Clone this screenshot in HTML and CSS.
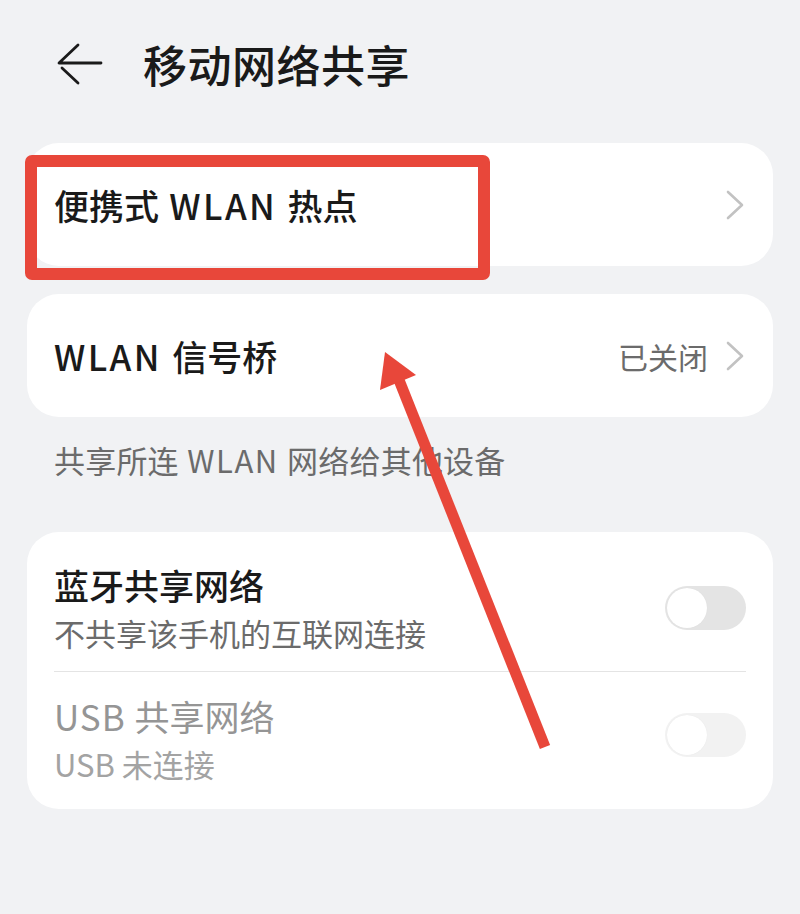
FILE: index.html
```html
<!DOCTYPE html>
<html lang="zh-CN">
<head>
<meta charset="utf-8">
<title>移动网络共享</title>
<link rel="stylesheet" href="styles.css">
</head>
<body>
<div class="page">
  <header class="header">
    <svg class="back" width="48" height="48" viewBox="0 0 48 48">
      <path d="M22 5 L3 23 L45 23" fill="none" stroke="#1a1a1a" stroke-width="2.8" stroke-linecap="round" stroke-linejoin="round"/>
      <path d="M6 28 L22 43" fill="none" stroke="#1a1a1a" stroke-width="2.8" stroke-linecap="round"/>
    </svg>
    <h1 class="title">移动网络共享</h1>
  </header>

  <section class="card card-single">
    <div class="row-single">
      <span class="item-title">便携式<span class="lat"> WLAN </span>热点</span>
      <span class="row-end">
        <svg class="chev" width="20" height="30" viewBox="0 0 20 30"><path d="M2 2 L16 15 L2 28" fill="none" stroke="#c2c2c2" stroke-width="2.6" stroke-linecap="round" stroke-linejoin="round"/></svg>
      </span>
    </div>
  </section>

  <section class="card card-single card-gap">
    <div class="row-single">
      <span class="item-title"><span class="lat">WLAN </span>信号桥</span>
      <span class="row-end">
        <span class="status">已关闭</span>
        <svg class="chev" width="20" height="30" viewBox="0 0 20 30"><path d="M2 2 L16 15 L2 28" fill="none" stroke="#c2c2c2" stroke-width="2.6" stroke-linecap="round" stroke-linejoin="round"/></svg>
      </span>
    </div>
  </section>

  <p class="caption">共享所连<span class="lat-c"> WLAN </span>网络给其他设备</p>

  <section class="card card-list">
    <div class="row-double row-first">
      <div class="texts">
        <span class="item-title">蓝牙共享网络</span>
        <span class="item-sub">不共享该手机的互联网连接</span>
      </div>
      <span class="toggle"><span class="knob"></span></span>
    </div>
    <div class="divider"></div>
    <div class="row-double row-last disabled">
      <div class="texts">
        <span class="item-title"><span class="lat-s">USB </span>共享网络</span>
        <span class="item-sub">USB 未连接</span>
      </div>
      <span class="toggle toggle-off"><span class="knob"></span></span>
    </div>
  </section>

  <div class="mark-box"></div>
  <svg class="mark-arrow" width="800" height="914" viewBox="0 0 800 914">
    <line x1="399" y1="380" x2="545" y2="747" stroke="#e8473a" stroke-width="11"/>
    <polygon points="385,352 380,390 416,375" fill="#e8473a"/>
  </svg>
</div>
</body>
</html>
```

FILE: styles.css
```css
html, body {
  margin: 0;
  padding: 0;
}
body {
  background: #f1f2f4;
  font-family: "Noto Sans CJK SC", "Noto Sans", sans-serif;
  color: #1a1a1a;
}
.page {
  position: relative;
  width: 800px;
  height: 914px;
  overflow: hidden;
}
.header {
  height: 128px;
  display: flex;
  align-items: center;
}
.back {
  margin-left: 56px;
  flex: none;
}
.title {
  margin: 0 0 0 39px;
  font-size: 44px;
  font-weight: 500;
  line-height: 56px;
  letter-spacing: 0.5px;
  color: #1a1a1a;
}
.card {
  margin: 0 27px;
  background: #ffffff;
  border-radius: 32px;
  padding: 0 27px;
}
.card-single {
  margin-top: 15px;
}
.card-gap {
  margin-top: 28px;
}
.row-single {
  height: 123px;
  display: flex;
  align-items: center;
  justify-content: space-between;
}
.item-title {
  font-size: 35px;
  font-weight: 500;
  line-height: 44px;
  color: #1a1a1a;
}
.lat {
  letter-spacing: 2.4px;
}
.lat-s {
  letter-spacing: 1px;
}
.lat-c {
  letter-spacing: 1.5px;
}
.row-end {
  display: flex;
  align-items: center;
  gap: 18px;
}
.status {
  font-size: 30px;
  line-height: 40px;
  color: #6b6b6b;
}
.chev {
  display: block;
}
.caption {
  margin: 23px 27px 0 54px;
  font-size: 31px;
  line-height: 40px;
  letter-spacing: 0.2px;
  color: #6b6b6b;
}
.card-list {
  margin-top: 52px;
}
.row-double {
  display: flex;
  align-items: center;
  justify-content: space-between;
}
.row-first {
  padding: 31px 0 18px;
}
.row-last {
  padding: 22px 0 25px;
}
.texts {
  display: flex;
  flex-direction: column;
}
.item-sub {
  margin-top: 6px;
  font-size: 31px;
  line-height: 40px;
  color: #6b6b6b;
}
.disabled .item-title {
  color: #959595;
  font-weight: 400;
}
.disabled .item-sub {
  color: #a3a3a3;
}
.divider {
  height: 1px;
  background: #e4e4e4;
}
.toggle {
  width: 81px;
  height: 44px;
  border-radius: 22px;
  background: #e4e4e4;
  box-sizing: border-box;
  padding: 2px;
  flex: none;
  display: flex;
}
.toggle-off {
  background: #f2f2f2;
  margin-top: -8px;
}
.knob {
  width: 40px;
  height: 40px;
  border-radius: 50%;
  background: #ffffff;
  box-shadow: 0 0 1px rgba(0, 0, 0, 0.08);
}
.mark-box {
  position: absolute;
  left: 25px;
  top: 155px;
  width: 465px;
  height: 125px;
  box-sizing: border-box;
  border: 12px solid #e8473a;
  border-radius: 7px;
}
.mark-arrow {
  position: absolute;
  left: 0;
  top: 0;
  pointer-events: none;
}
```
